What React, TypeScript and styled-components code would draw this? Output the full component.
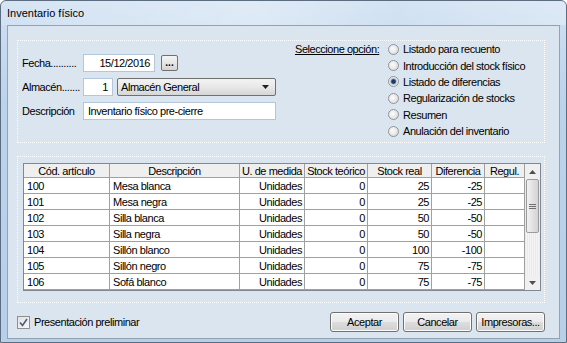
import React from "react";
import styled, { createGlobalStyle } from "styled-components";

const Global = createGlobalStyle`
  html, body { margin: 0; padding: 0; background: #fff; }
  body { font-family: "Liberation Sans", Arial, sans-serif; font-size: 11px; color: #000; }
  * { box-sizing: border-box; }
`;

const Window = styled.div`
  width: 567px;
  height: 343px;
  display: flex;
  flex-direction: column;
  border: 1px solid #5d6d80;
  border-radius: 6px 6px 0 0;
  background: linear-gradient(180deg, #cfe0f2 0%, #bcd3ec 30%, #b7cfe9 100%);
  overflow: hidden;
`;

const TitleBar = styled.div`
  height: 24px;
  flex: none;
  display: flex;
  align-items: center;
  padding-left: 6px;
  font-size: 11px;
  color: #000;
  background: linear-gradient(90deg, rgba(255,255,255,0.15) 0%, rgba(255,255,255,0.35) 45%, rgba(255,255,255,0.1) 70%, rgba(255,255,255,0.3) 100%);
`;

const Client = styled.div`
  flex: 1;
  margin: 0 6px 3px 6px;
  border: 1px solid #92a3b6;
  background: #dbe5f0;
  padding: 14px 14px 0 9px;
  display: flex;
  flex-direction: column;
  letter-spacing: -0.45px;
`;

const Group = styled.div<{ $h: number }>`
  height: ${(p) => p.$h}px;
  flex: none;
  border: 1px dotted #ffffff;
`;

const TopGroup = styled(Group)`
  display: flex;
  align-items: flex-start;
`;

const FormBlock = styled.div`
  width: 254px;
  margin-left: 4px;
  padding-top: 13px;
  display: flex;
  flex-direction: column;
  gap: 6px;
`;

const FormRow = styled.div`
  height: 18px;
  display: flex;
  align-items: center;
`;

const Label = styled.span`
  width: 61px;
  flex: none;
  white-space: nowrap;
  overflow: hidden;
`;

const TextBox = styled.div<{ $w: number; $align?: string }>`
  width: ${(p) => p.$w}px;
  height: 18px;
  background: #fff;
  border: 1px solid #b4c6d9;
  display: flex;
  align-items: center;
  justify-content: ${(p) => p.$align || "flex-start"};
  padding: 0 4px;
  white-space: nowrap;
`;

const DotsButton = styled.div`
  width: 17px;
  height: 16px;
  margin-left: 6px;
  border: 1px solid #707070;
  border-radius: 2px;
  background: linear-gradient(180deg, #f4f4f4 0%, #e6e6e6 50%, #d4d4d4 100%);
  display: flex;
  align-items: flex-end;
  justify-content: center;
  font-weight: bold;
  font-size: 10px;
  line-height: 10px;
  letter-spacing: 0;
  padding-bottom: 2px;
`;

const Select = styled.div`
  width: 159px;
  height: 18px;
  margin-left: 4px;
  border: 1px solid #707070;
  border-radius: 2px;
  background: linear-gradient(180deg, #f3f3f3 0%, #e8e8e8 50%, #d6d6d6 100%);
  display: flex;
  align-items: center;
  justify-content: space-between;
  padding: 0 6px 0 3px;
`;

const OptionsBlock = styled.div`
  margin-left: 19px;
  display: flex;
  align-items: flex-start;
`;

const OptionsTitle = styled.span`
  width: 93px;
  height: 16.4px;
  display: flex;
  align-items: center;
  text-decoration: underline;
  white-space: nowrap;
`;

const OptionList = styled.div`
  display: flex;
  flex-direction: column;
`;

const OptionRow = styled.div`
  height: 16.4px;
  display: flex;
  align-items: center;
  gap: 4px;
  white-space: nowrap;
`;

const Radio = styled.span<{ $checked?: boolean }>`
  width: 11px;
  height: 11px;
  flex: none;
  border-radius: 50%;
  border: 1px solid #8f9397;
  background: ${(p) =>
    p.$checked
      ? "radial-gradient(circle, #1d3a66 0 1.8px, #6a86b0 2.4px, #c9d3df 3.2px, #f4f4f4 4.5px)"
      : "radial-gradient(circle at 40% 40%, #fbfbfb 0, #e9e9e9 50%, #d0d0d0 100%)"};
`;

const TableGroup = styled(Group)`
  margin-top: 13px;
  padding: 6px 0 0 5px;
`;

const Grid = styled.div`
  width: 518px;
  height: 128px;
  border: 1px solid #828790;
  background: #fff;
  display: flex;
`;

const Cells = styled.div`
  width: 501px;
  display: grid;
  grid-template-columns: 86px 130px 65px 63px 64px 53px 40px;
  grid-template-rows: 14px repeat(7, 16px);
  align-content: start;
`;

const HeadCell = styled.div`
  border-right: 1px solid #a0a0a0;
  border-bottom: 1px solid #a0a0a0;
  background: #efefef;
  display: flex;
  align-items: center;
  justify-content: center;
  white-space: nowrap;
  overflow: hidden;
`;

const Cell = styled.div<{ $right?: boolean }>`
  border-right: 1px solid #a0a0a0;
  border-bottom: 1px solid #a0a0a0;
  display: flex;
  align-items: center;
  justify-content: ${(p) => (p.$right ? "flex-end" : "flex-start")};
  padding: 0 2px 0 3px;
  white-space: nowrap;
  overflow: hidden;
`;

const ScrollBar = styled.div`
  width: 15px;
  display: flex;
  flex-direction: column;
  background: #f0f0f0;
`;

const ScrollArrow = styled.div`
  height: 15px;
  flex: none;
  display: flex;
  align-items: center;
  justify-content: center;
  background: #f0f0f0;
`;

const Track = styled.div`
  flex: 1;
  padding: 0 1px;
  background: repeating-linear-gradient(90deg, #eaeaea 0 1px, #f4f4f4 1px 2px);
`;

const Thumb = styled.div`
  height: 54px;
  border: 1px solid #9c9c9c;
  border-radius: 2px;
  background: linear-gradient(90deg, #f2f2f2 0%, #e2e2e2 50%, #d3d3d3 100%);
  display: flex;
  align-items: center;
  justify-content: center;
`;

const Footer = styled.div`
  flex: 1;
  display: flex;
  align-items: flex-start;
  padding-top: 9px;
`;

const CheckWrap = styled.div`
  height: 20px;
  display: flex;
  align-items: center;
  gap: 4px;
`;

const CheckBox = styled.span`
  width: 13px;
  height: 13px;
  border: 1px solid #8e8f8f;
  background: linear-gradient(135deg, #e2e2e2, #f8f8f8);
  display: flex;
  align-items: center;
  justify-content: center;
`;

const Buttons = styled.div`
  margin-left: auto;
  display: flex;
  gap: 4px;
`;

const Button = styled.div<{ $w: number }>`
  width: ${(p) => p.$w}px;
  height: 20px;
  border: 1px solid #707070;
  border-radius: 3px;
  background: linear-gradient(180deg, #f2f2f2 0%, #ebebeb 48%, #dddddd 52%, #cfcfcf 100%);
  box-shadow: inset 0 0 0 1px #fcfcfc;
  display: flex;
  align-items: center;
  justify-content: center;
  white-space: nowrap;
`;

const rows = [
  ["100", "Mesa blanca", "0", "25", "-25"],
  ["101", "Mesa negra", "0", "25", "-25"],
  ["102", "Silla blanca", "0", "50", "-50"],
  ["103", "Silla negra", "0", "50", "-50"],
  ["104", "Sillón blanco", "0", "100", "-100"],
  ["105", "Sillón negro", "0", "75", "-75"],
  ["106", "Sofá blanco", "0", "75", "-75"],
];

const options = [
  "Listado para recuento",
  "Introducción del stock físico",
  "Listado de diferencias",
  "Regularización de stocks",
  "Resumen",
  "Anulación del inventario",
];

const headers = ["Cód. artículo", "Descripción", "U. de medida", "Stock teórico", "Stock real", "Diferencia", "Regul."];

export default function App() {
  return (
    <>
      <Global />
      <Window>
        <TitleBar>Inventario físico</TitleBar>
        <Client>
          <TopGroup $h={103}>
            <FormBlock>
              <FormRow>
                <Label>Fecha..........</Label>
                <TextBox $w={72} $align="flex-end">15/12/2016</TextBox>
                <DotsButton>...</DotsButton>
              </FormRow>
              <FormRow>
                <Label>Almacén.......</Label>
                <TextBox $w={30} $align="flex-end">1</TextBox>
                <Select>
                  <span>Almacén General</span>
                  <svg width="7" height="4" viewBox="0 0 7 4">
                    <path d="M0 0 H7 L3.5 4 Z" fill="#222" />
                  </svg>
                </Select>
              </FormRow>
              <FormRow>
                <Label>Descripción</Label>
                <TextBox $w={193}>Inventario físico pre-cierre</TextBox>
              </FormRow>
            </FormBlock>
            <OptionsBlock>
              <OptionsTitle>Seleccione opción:</OptionsTitle>
              <OptionList>
                {options.map((o, i) => (
                  <OptionRow key={o}>
                    <Radio $checked={i === 2} />
                    <span>{o}</span>
                  </OptionRow>
                ))}
              </OptionList>
            </OptionsBlock>
          </TopGroup>
          <TableGroup $h={147}>
            <Grid>
              <Cells>
                {headers.map((h) => (
                  <HeadCell key={h}>{h}</HeadCell>
                ))}
                {rows.map((r) => (
                  <React.Fragment key={r[0]}>
                    <Cell>{r[0]}</Cell>
                    <Cell>{r[1]}</Cell>
                    <Cell $right>Unidades</Cell>
                    <Cell $right>{r[2]}</Cell>
                    <Cell $right>{r[3]}</Cell>
                    <Cell $right>{r[4]}</Cell>
                    <Cell />
                  </React.Fragment>
                ))}
              </Cells>
              <ScrollBar>
                <ScrollArrow>
                  <svg width="7" height="4" viewBox="0 0 7 4">
                    <path d="M0 4 H7 L3.5 0 Z" fill="#505050" />
                  </svg>
                </ScrollArrow>
                <Track>
                  <Thumb>
                    <svg width="7" height="7" viewBox="0 0 7 7">
                      <path d="M0 1.5 H7 M0 3.5 H7 M0 5.5 H7" stroke="#707070" strokeWidth="1" />
                    </svg>
                  </Thumb>
                </Track>
                <ScrollArrow>
                  <svg width="7" height="4" viewBox="0 0 7 4">
                    <path d="M0 0 H7 L3.5 4 Z" fill="#505050" />
                  </svg>
                </ScrollArrow>
              </ScrollBar>
            </Grid>
          </TableGroup>
          <Footer>
            <CheckWrap>
              <CheckBox>
                <svg width="9" height="9" viewBox="0 0 9 9">
                  <path d="M1 4.5 L3.5 7.5 L8 1" fill="none" stroke="#4a5d7e" strokeWidth="1.6" />
                </svg>
              </CheckBox>
              <span>Presentación preliminar</span>
            </CheckWrap>
            <Buttons>
              <Button $w={69}>Aceptar</Button>
              <Button $w={69}>Cancelar</Button>
              <Button $w={69}>Impresoras...</Button>
            </Buttons>
          </Footer>
        </Client>
      </Window>
    </>
  );
}
